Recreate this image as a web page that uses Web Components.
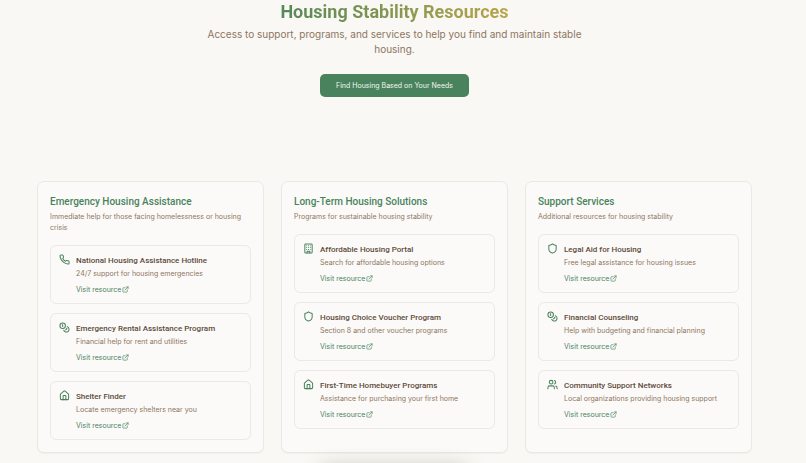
<!DOCTYPE html>
<html lang="en">
<head>
<meta charset="utf-8">
<meta name="viewport" content="width=device-width, initial-scale=1">
<title>Housing Stability Resources</title>
<style>
    :root {
        --bg: #faf8f4;
        --card: #fcfaf8;
        --line: #ebe9e5;
        --green: #48835e;
        --brown: #8c765f;
        --dark: #5b4a3a;
        --heading: Roboto, "Liberation Sans", sans-serif;
    }

    body {
        margin: 0;
        background: var(--bg);
        color: var(--brown);
        font-family: Inter, "Liberation Sans", sans-serif;
        font-size: 7px;
        overflow: hidden;
    }
</style>
</head>
<body>
<resources-page>
    <page-hero slot="hero" heading="Housing Stability Resources" action="Find Housing Based on Your Needs">
        Access to support, programs, and services to help you find and maintain stable housing.
    </page-hero>

    <resource-group name="Emergency Housing Assistance" description="Immediate help for those facing homelessness or housing crisis">
        <resource-item icon="phone" name="National Housing Assistance Hotline">24/7 support for housing emergencies</resource-item>
        <resource-item icon="coins" name="Emergency Rental Assistance Program">Financial help for rent and utilities</resource-item>
        <resource-item icon="house" name="Shelter Finder">Locate emergency shelters near you</resource-item>
    </resource-group>

    <resource-group name="Long-Term Housing Solutions" description="Programs for sustainable housing stability">
        <resource-item icon="building" name="Affordable Housing Portal">Search for affordable housing options</resource-item>
        <resource-item icon="shield" name="Housing Choice Voucher Program">Section 8 and other voucher programs</resource-item>
        <resource-item icon="house" name="First-Time Homebuyer Programs">Assistance for purchasing your first home</resource-item>
    </resource-group>

    <resource-group name="Support Services" description="Additional resources for housing stability">
        <resource-item icon="shield" name="Legal Aid for Housing">Free legal assistance for housing issues</resource-item>
        <resource-item icon="coins" name="Financial Counseling">Help with budgeting and financial planning</resource-item>
        <resource-item icon="users" name="Community Support Networks">Local organizations providing housing support</resource-item>
    </resource-group>
</resources-page>
<floating-dock></floating-dock>

<script>
const ICONS = {
    phone: '<path d="M22 16.92v3a2 2 0 0 1-2.18 2 19.79 19.79 0 0 1-8.63-3.07 19.5 19.5 0 0 1-6-6 19.79 19.79 0 0 1-3.07-8.67A2 2 0 0 1 4.11 2h3a2 2 0 0 1 2 1.72 12.84 12.84 0 0 0 .7 2.81 2 2 0 0 1-.45 2.11L8.09 9.91a16 16 0 0 0 6 6l1.27-1.27a2 2 0 0 1 2.11-.45 12.84 12.84 0 0 0 2.81.7A2 2 0 0 1 22 16.92z"/>',
    coins: '<circle cx="8" cy="8" r="6"/><path d="M18.09 10.37A6 6 0 1 1 10.34 18"/><path d="M7 6h1v4"/><path d="m16.71 13.88.7.71-2.82 2.82"/>',
    house: '<path d="M15 21v-8a1 1 0 0 0-1-1h-4a1 1 0 0 0-1 1v8"/><path d="M3 10a2 2 0 0 1 .709-1.528l7-5.999a2 2 0 0 1 2.582 0l7 5.999A2 2 0 0 1 21 10v9a2 2 0 0 1-2 2H5a2 2 0 0 1-2-2z"/>',
    building: '<rect width="16" height="20" x="4" y="2" rx="2"/><path d="M9 22v-4h6v4"/><path d="M8 6h.01M16 6h.01M12 6h.01M12 10h.01M12 14h.01M16 10h.01M16 14h.01M8 10h.01M8 14h.01"/>',
    shield: '<path d="M20 13c0 5-3.5 7.5-7.66 8.95a1 1 0 0 1-.67-.01C7.5 20.5 4 18 4 13V6a1 1 0 0 1 1-1c2 0 4.5-1.2 6.24-2.72a1.17 1.17 0 0 1 1.52 0C14.51 3.81 17 5 19 5a1 1 0 0 1 1 1z"/>',
    users: '<path d="M16 21v-2a4 4 0 0 0-4-4H6a4 4 0 0 0-4 4v2"/><circle cx="9" cy="7" r="4"/><path d="M22 21v-2a4 4 0 0 0-3-3.87"/><path d="M16 3.13a4 4 0 0 1 0 7.75"/>',
    external: '<path d="M15 3h6v6"/><path d="M10 14 21 3"/><path d="M18 13v6a2 2 0 0 1-2 2H5a2 2 0 0 1-2-2V8a2 2 0 0 1 2-2h6"/>'
};

class LineIcon extends HTMLElement {
    constructor() {
        super().attachShadow({ mode: 'open' });
    }

    connectedCallback() {
        this.shadowRoot.innerHTML =
            `
            <style>
            :host {
                display: block;
                flex: none;
                width: 11px;
                height: 11px;
                color: var(--green);
            }

            svg {
                display: block;
                width: 100%;
                height: 100%;
            }
            </style>
            <svg viewBox="0 0 24 24" fill="none" stroke="currentColor" stroke-width="2.2" stroke-linecap="round" stroke-linejoin="round" aria-hidden="true">${ICONS[this.getAttribute('name')]}</svg>
            `
    }
}

class ResourcesPage extends HTMLElement {
    constructor() {
        super()
        .attachShadow({ mode: 'open' })
        .innerHTML =
            `
            <style>
            :host {
                display: block;
                padding: 0 54px 10px 37px;
            }

            .groups {
                display: grid;
                grid-template-columns: repeat(3, minmax(0, 1fr));
                gap: 17px;
                margin-top: 84px;
            }
            </style>
            <main>
                <slot name="hero"></slot>
                <div class="groups"><slot></slot></div>
            </main>
            `
    }
}

class PageHero extends HTMLElement {
    constructor() {
        super()
        .attachShadow({ mode: 'open' })
        .innerHTML =
            `
            <style>
            :host {
                display: flex;
                flex-direction: column;
                align-items: center;
                text-align: center;
            }

            h1 {
                margin: 0;
                font: 700 18px/23px var(--heading);
                background: linear-gradient(90deg, #558859, #b9a54b);
                -webkit-background-clip: text;
                background-clip: text;
                color: transparent;
            }

            p {
                margin: 4px 0 17px;
                max-width: 390px;
                font-size: 10px;
                line-height: 15px;
            }

            button {
                border: 0;
                border-radius: 5px;
                padding: 0 16px;
                height: 23px;
                background: var(--green);
                color: #f5f6ee;
                font: inherit;
                cursor: pointer;
            }
            </style>
            <h1></h1>
            <p><slot></slot></p>
            <button type="button"></button>
            `
        this.shadowRoot.querySelector('h1').textContent = this.getAttribute('heading');
        this.shadowRoot.querySelector('button').textContent = this.getAttribute('action');
    }
}

class ResourceGroup extends HTMLElement {
    constructor() {
        super()
        .attachShadow({ mode: 'open' })
        .innerHTML =
            `
            <style>
            :host {
                display: block;
                border: 1px solid var(--line);
                border-radius: 7px;
                padding: 13px 12px 12px;
                background: var(--card);
                box-shadow: 0 1px 1px rgba(60, 50, 30, .05);
            }

            h2 {
                margin: 0;
                font: 500 10px/14px var(--heading);
                color: var(--green);
            }

            p {
                margin: 2px 0 12px;
                line-height: 11px;
            }

            .items {
                display: grid;
                gap: 9px;
            }
            </style>
            <h2></h2>
            <p></p>
            <div class="items"><slot></slot></div>
            `
        this.shadowRoot.querySelector('h2').textContent = this.getAttribute('name');
        this.shadowRoot.querySelector('p').textContent = this.getAttribute('description');
    }
}

class ResourceItem extends HTMLElement {
    constructor() {
        super()
        .attachShadow({ mode: 'open' })
        .innerHTML =
            `
            <style>
            :host {
                display: flex;
                gap: 6px;
                border: 1px solid var(--line);
                border-radius: 6px;
                padding: 8px;
            }

            h3 {
                margin: 0;
                font: 500 8px/14px var(--heading);
                color: var(--dark);
            }

            p {
                margin: 0 0 4px;
                line-height: 12px;
            }

            a {
                display: flex;
                align-items: center;
                gap: 1px;
                width: fit-content;
                line-height: 11px;
                color: var(--green);
                text-decoration: none;
            }

            a:hover {
                text-decoration: underline;
            }

            a line-icon {
                width: 7px;
                height: 7px;
            }
            </style>
            <line-icon name="${this.getAttribute('icon')}"></line-icon>
            <div>
                <h3></h3>
                <p><slot></slot></p>
                <a href="#">Visit resource <line-icon name="external"></line-icon></a>
            </div>
            `
        this.shadowRoot.querySelector('h3').textContent = this.getAttribute('name');
    }
}

/* Dock parked under the window edge, only its shadow shows */
class FloatingDock extends HTMLElement {
    constructor() {
        super()
        .attachShadow({ mode: 'open' })
        .innerHTML =
            `
            <style>
            :host {
                position: fixed;
                top: 100%;
                left: 0;
                right: 18px;
                display: flex;
                justify-content: center;
            }

            div {
                width: 150px;
                height: 30px;
                border-radius: 10px;
                box-shadow: 0 5px 20px rgba(60, 60, 50, .3);
            }
            </style>
            <div></div>
            `
    }
}

window.customElements.define("line-icon", LineIcon);
window.customElements.define("resources-page", ResourcesPage);
window.customElements.define("page-hero", PageHero);
window.customElements.define("resource-group", ResourceGroup);
window.customElements.define("resource-item", ResourceItem);
window.customElements.define("floating-dock", FloatingDock);
</script>
</body>
</html>
